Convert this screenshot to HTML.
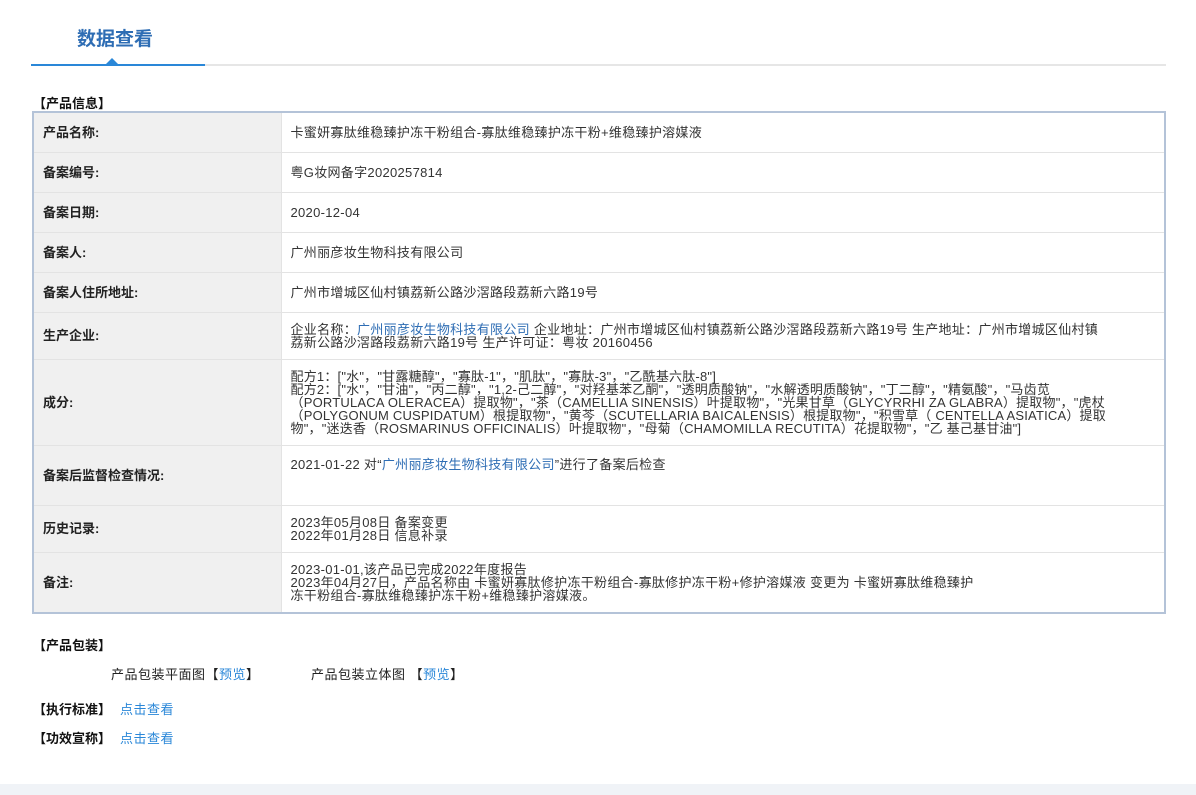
<!DOCTYPE html>
<html><head><meta charset="utf-8"><style>
body{margin:0;width:1196px;height:795px;background:#fff;font-family:"Liberation Sans","Noto Sans CJK SC",sans-serif;font-size:13px;color:#333;position:relative;overflow:hidden}
.tab{position:absolute;left:77px;top:24px;font-size:19px;font-weight:bold;color:#2e6db4}
.gl{position:absolute;left:31px;top:64px;width:1135px;height:2px;background:#e6e6e6}
.bl{position:absolute;left:31px;top:64px;width:174px;height:2px;background:#2a87d8}
.tri{position:absolute;left:106px;top:58px;width:0;height:0;border-left:6px solid transparent;border-right:6px solid transparent;border-bottom:6px solid #2a87d8}
.h{position:absolute;font-weight:bold;color:#111;font-size:13px}
table{position:absolute;left:32px;top:111px;width:1134px;border-collapse:collapse;border:2px solid #b4c3d8;table-layout:fixed}
td{border-bottom:1px solid #e3e3e3;padding:0 0 0 9px;line-height:13px;vertical-align:middle;letter-spacing:0.3px}
td.l{padding:0 0 0 9px;background:#f0f0f0;font-weight:bold;color:#222;border-right:1px solid #e3e3e3;letter-spacing:0}
a{color:#2a87d8;text-decoration:none}
.b{color:#2e6db4}
.foot{position:absolute;left:0;top:784px;width:1196px;height:11px;background:#f0f3f7}
.s{letter-spacing:0.5px}
</style></head><body>
<div class="tab">数据查看</div>
<div class="gl"></div><div class="bl"></div><div class="tri"></div>
<div class="h" style="left:33px;top:93px">【产品信息】</div>
<table>
<colgroup><col style="width:248px"><col></colgroup>
<tr style="height:40px"><td class="l">产品名称:</td><td>卡蜜妍寡肽维稳臻护冻干粉组合-寡肽维稳臻护冻干粉+维稳臻护溶媒液</td></tr>
<tr style="height:40px"><td class="l">备案编号:</td><td>粤G妆网备字2020257814</td></tr>
<tr style="height:40px"><td class="l">备案日期:</td><td>2020-12-04</td></tr>
<tr style="height:40px"><td class="l">备案人:</td><td>广州丽彦妆生物科技有限公司</td></tr>
<tr style="height:40px"><td class="l">备案人住所地址:</td><td>广州市增城区仙村镇荔新公路沙滘路段荔新六路19号</td></tr>
<tr style="height:47px"><td class="l">生产企业:</td><td>企业名称：<span class="b">广州丽彦妆生物科技有限公司</span> 企业地址：广州市增城区仙村镇荔新公路沙滘路段荔新六路19号 生产地址：广州市增城区仙村镇<br>荔新公路沙滘路段荔新六路19号 生产许可证：粤妆 20160456</td></tr>
<tr style="height:86px"><td class="l">成分:</td><td style="letter-spacing:0.2px">配方1：["水"，"甘露糖醇"，"寡肽-1"，"肌肽"，"寡肽-3"，"乙酰基六肽-8"]<br>配方2：["水"，"甘油"，"丙二醇"，"1,2-己二醇"，"对羟基苯乙酮"，"透明质酸钠"，"水解透明质酸钠"，"丁二醇"，"精氨酸"，"马齿苋<br>（PORTULACA OLERACEA）提取物"，"茶（CAMELLIA SINENSIS）叶提取物"，"光果甘草（GLYCYRRHI ZA GLABRA）提取物"，"虎杖<br>（POLYGONUM CUSPIDATUM）根提取物"，"黄芩（SCUTELLARIA BAICALENSIS）根提取物"，"积雪草（ CENTELLA ASIATICA）提取<br>物"，"迷迭香（ROSMARINUS OFFICINALIS）叶提取物"，"母菊（CHAMOMILLA RECUTITA）花提取物"，"乙 基己基甘油"]</td></tr>
<tr style="height:60px"><td class="l">备案后监督检查情况:</td><td style="vertical-align:top;padding-top:12px">2021-01-22 对“<span class="b">广州丽彦妆生物科技有限公司</span>”进行了备案后检查</td></tr>
<tr style="height:47px"><td class="l">历史记录:</td><td>2023年05月08日 备案变更<br>2022年01月28日 信息补录</td></tr>
<tr style="height:61px"><td class="l">备注:</td><td>2023-01-01,该产品已完成2022年度报告<br>2023年04月27日，产品名称由 卡蜜妍寡肽修护冻干粉组合-寡肽修护冻干粉+修护溶媒液 变更为 卡蜜妍寡肽维稳臻护<br>冻干粉组合-寡肽维稳臻护冻干粉+维稳臻护溶媒液。</td></tr>
</table>
<div class="h" style="left:33px;top:635px">【产品包装】</div>
<div class="s" style="position:absolute;left:111px;top:664px;color:#222">产品包装平面图【<a>预览</a>】</div>
<div class="s" style="position:absolute;left:311px;top:664px;color:#222">产品包装立体图 【<a>预览</a>】</div>
<div class="h" style="left:33px;top:699px">【执行标准】</div><a class="s" style="position:absolute;left:120px;top:699px">点击查看</a>
<div class="h" style="left:33px;top:728px">【功效宣称】</div><a class="s" style="position:absolute;left:120px;top:728px">点击查看</a>
<div class="foot"></div>
</body></html>
